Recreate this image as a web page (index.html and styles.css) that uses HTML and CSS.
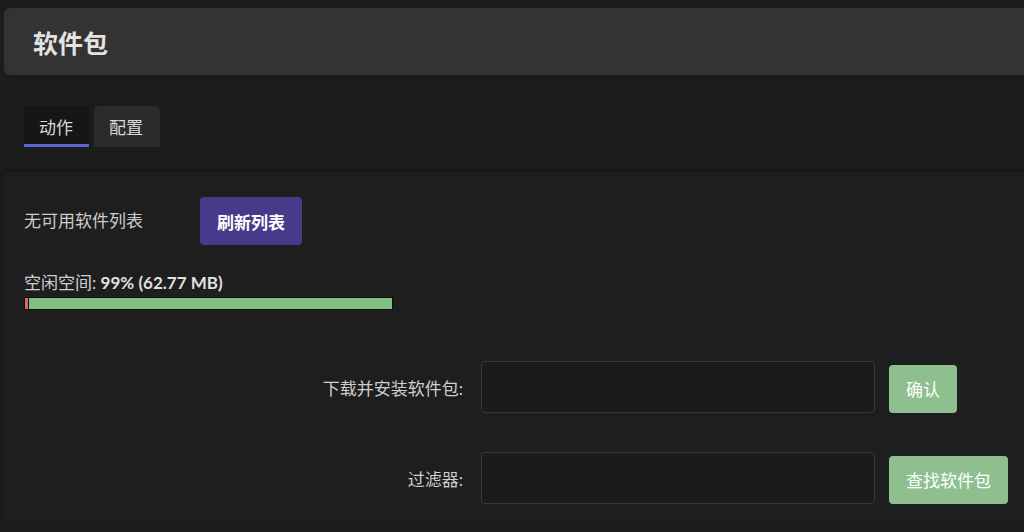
FILE: index.html
```html
<!DOCTYPE html>
<html lang="zh-CN">
<head>
    <meta charset="UTF-8">
    <meta name="viewport" content="width=device-width, initial-scale=1.0">
    <title>软件包</title>
    <link rel="stylesheet" href="styles.css">
</head>
<body>
    <div class="page-header">
        <h1>软件包</h1>
    </div>

    <div class="tabs">
        <div class="tab active">动作</div>
        <div class="tab">配置</div>
    </div>

    <div class="panel">
        <div class="list-row">
            <span class="list-status">无可用软件列表</span>
            <button class="btn btn-purple">刷新列表</button>
        </div>

        <div class="disk">
            <div class="disk-label">空闲空间: <strong>99% (62.77 MB)</strong></div>
            <div class="disk-bar">
                <div class="disk-used"></div>
                <div class="disk-free"></div>
            </div>
        </div>

        <form class="pkg-form">
            <div class="form-row">
                <label for="url">下载并安装软件包:</label>
                <input type="text" id="url">
                <button type="button" class="btn btn-green">确认</button>
            </div>
            <div class="form-row">
                <label for="filter">过滤器:</label>
                <input type="text" id="filter">
                <button type="button" class="btn btn-green">查找软件包</button>
            </div>
        </form>
    </div>
</body>
</html>
```

FILE: styles.css
```css
body {
    font-family: Lato, "Noto Sans CJK SC", sans-serif;
    font-size: 17px;
    margin: 0;
    padding: 8px 0 0 4px;
    background-color: #1c1c1c;
    color: #cccccc;
    overflow: hidden;
}

.page-header {
    height: 67px;
    padding-left: 29px;
    margin-right: -10px;
    display: flex;
    align-items: center;
    background-color: #333333;
    border-radius: 6px 0 0 6px;
}

.page-header h1 {
    margin: 0;
    font-size: 25px;
    font-weight: bold;
    color: #e2e2e2;
}

.tabs {
    display: flex;
    gap: 5px;
    margin-top: 31px;
    padding-left: 20px;
}

.tab {
    height: 41px;
    padding: 0 16px 0 15px;
    display: flex;
    align-items: center;
    box-sizing: border-box;
    background-color: #2b2b2b;
    border-radius: 5px 5px 0 0;
    color: #d8d8d8;
}

.tab + .tab {
    padding-right: 17px;
}

.tab.active {
    background-color: #161616;
    border-bottom: 3px solid #5b64d4;
    padding-top: 3px;
}

.panel {
    margin-top: 25px;
    margin-right: -10px;
    padding: 25px 20px 14px;
    height: 308px;
    background-color: #1e1e1e;
    box-shadow: 0 -2px 4px rgba(0, 0, 0, 0.25);
    border-radius: 4px 0 0 0;
    position: relative;
}

.panel::after {
    content: "";
    position: absolute;
    left: -4px;
    right: 0;
    top: 347px;
    height: 20px;
    background-color: #191919;
}

.list-row {
    display: grid;
    grid-template-columns: 176px auto;
    align-items: center;
    justify-items: start;
}

.list-status {
    margin-top: -4px;
}

.btn {
    font-family: Lato, "Noto Sans CJK SC", sans-serif;
    font-size: 17px;
    height: 48px;
    padding: 0 17px;
    border: none;
    border-radius: 4px;
    color: #ffffff;
    cursor: pointer;
}

.btn-purple {
    background-color: #483a8b;
    font-weight: bold;
}

.btn-green {
    background-color: #8fbf8f;
}

.disk {
    margin-top: 28px;
}

.disk-label {
    line-height: 20px;
    color: #d0d0d0;
}

.disk-label strong {
    color: #e0e0e0;
}

.disk-bar {
    display: flex;
    width: 369px;
    height: 13px;
    margin-top: 4px;
    border: 1px solid #0e0e0e;
    box-sizing: border-box;
    background-color: #0e0e0e;
}

.disk-used {
    width: 3px;
    background-color: #e06666;
}

.disk-free {
    flex: 1;
    margin-left: 1px;
    background-color: #80c080;
}

.pkg-form {
    margin-top: 51px;
    display: flex;
    flex-direction: column;
    gap: 39px;
}

.form-row {
    display: grid;
    grid-template-columns: 441px 394px auto;
    column-gap: 16px;
    align-items: center;
    justify-items: start;
}

.form-row label {
    justify-self: end;
    margin-right: 2px;
    color: #cfcfcf;
}

.form-row input {
    width: 100%;
    height: 52px;
    box-sizing: border-box;
    background-color: #1b1b1b;
    border: 1px solid #3a3a3a;
    border-radius: 4px;
    color: #cccccc;
    padding: 8px;
}

.form-row .btn {
    margin: 3px 0 0 -2px;
}
```
